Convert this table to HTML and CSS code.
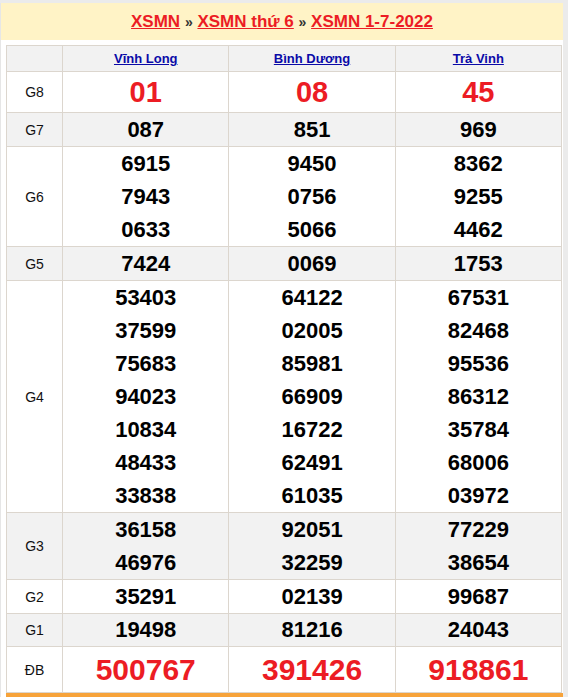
FILE: index.html
```html
<!DOCTYPE html>
<html lang="vi">
<head>
<meta charset="utf-8">
<title>XSMN 1-7-2022</title>
<link rel="stylesheet" href="styles.css">
</head>
<body>
<div class="wrap">
  <div class="title">
    <a href="#">XSMN</a> <span class="sep">»</span> <a href="#">XSMN thứ 6</a> <span class="sep">»</span> <a href="#">XSMN 1-7-2022</a>
  </div>
  <div class="box">
    <table class="kq">
      <colgroup><col class="c0"><col class="c1"><col class="c1"><col class="c1"></colgroup>
      <tr class="head alt"><th></th><th><a href="#">Vĩnh Long</a></th><th><a href="#">Bình Dương</a></th><th><a href="#">Trà Vinh</a></th></tr>
      <tr class="g8"><td class="lb">G8</td><td><div class="n big">01</div></td><td><div class="n big">08</div></td><td><div class="n big">45</div></td></tr>
      <tr class="alt"><td class="lb">G7</td><td><div class="n">087</div></td><td><div class="n">851</div></td><td><div class="n">969</div></td></tr>
      <tr><td class="lb">G6</td>
        <td><div class="n">6915</div><div class="n">7943</div><div class="n">0633</div></td>
        <td><div class="n">9450</div><div class="n">0756</div><div class="n">5066</div></td>
        <td><div class="n">8362</div><div class="n">9255</div><div class="n">4462</div></td></tr>
      <tr class="alt"><td class="lb">G5</td><td><div class="n">7424</div></td><td><div class="n">0069</div></td><td><div class="n">1753</div></td></tr>
      <tr><td class="lb">G4</td>
        <td><div class="n">53403</div><div class="n">37599</div><div class="n">75683</div><div class="n">94023</div><div class="n">10834</div><div class="n">48433</div><div class="n">33838</div></td>
        <td><div class="n">64122</div><div class="n">02005</div><div class="n">85981</div><div class="n">66909</div><div class="n">16722</div><div class="n">62491</div><div class="n">61035</div></td>
        <td><div class="n">67531</div><div class="n">82468</div><div class="n">95536</div><div class="n">86312</div><div class="n">35784</div><div class="n">68006</div><div class="n">03972</div></td></tr>
      <tr class="alt"><td class="lb">G3</td>
        <td><div class="n">36158</div><div class="n">46976</div></td>
        <td><div class="n">92051</div><div class="n">32259</div></td>
        <td><div class="n">77229</div><div class="n">38654</div></td></tr>
      <tr><td class="lb">G2</td><td><div class="n">35291</div></td><td><div class="n">02139</div></td><td><div class="n">99687</div></td></tr>
      <tr class="alt"><td class="lb">G1</td><td><div class="n g1">19498</div></td><td><div class="n g1">81216</div></td><td><div class="n g1">24043</div></td></tr>
      <tr><td class="lb">ĐB</td><td><div class="n db">500767</div></td><td><div class="n db">391426</div></td><td><div class="n db">918861</div></td></tr>
    </table>
    <div class="bar"></div>
  </div>
</div>
</body>
</html>
```
FILE: styles.css
```css
html, body {
  margin: 0;
  padding: 0;
}
body {
  background: #ebebeb;
  font-family: "Liberation Sans", Arial, sans-serif;
  padding-top: 3px;
}
.wrap {
  width: 562px;
  background: #fff;
  border-left: 1px solid #e6e6e6;
}
.title {
  background: #fff3c6;
  height: 37px;
  line-height: 37px;
  text-align: center;
  font-size: 17px;
  font-weight: bold;
  color: #222;
}
.title a {
  color: #ec1c24;
  text-decoration: underline;
}
.title .sep {
  color: #333;
  font-size: 14px;
}
.box {
  padding: 5px 0 0 5px;
}
.kq {
  border-collapse: collapse;
  width: 556px;
  table-layout: fixed;
}
.c0 { width: 56px; }
.c1 { width: 166px; }
.kq th, .kq td {
  border: 1px solid #dcd6ce;
  padding: 0;
  text-align: center;
  vertical-align: middle;
}
.kq th {
  height: 25px;
  font-size: 13px;
  font-weight: bold;
}
.kq th a {
  color: #0a0aa8;
  text-decoration: underline;
}
.alt td, .alt th {
  background: #f2f2f2;
}
.lb {
  font-size: 14px;
  color: #111;
}
.n {
  font-size: 22px;
  font-weight: bold;
  line-height: 33px;
  color: #000;
}
.n.g1 {
  line-height: 32px;
}
.n.big {
  font-size: 29px;
  line-height: 40px;
  color: #ec1c24;
}
.n.db {
  font-size: 30px;
  line-height: 45px;
  color: #ec1c24;
}
.bar {
  height: 5px;
  width: 557px;
  background: #f7a33a;
}
```
